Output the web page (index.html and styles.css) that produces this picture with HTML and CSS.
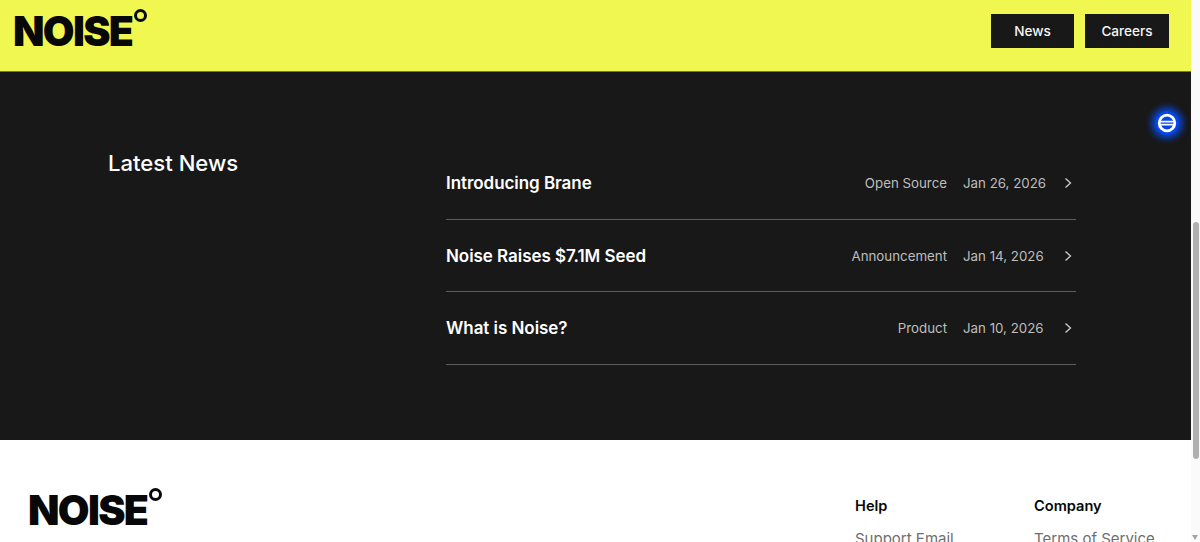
FILE: index.html
```html
<!DOCTYPE html>
<html lang="en">
<head>
    <meta charset="UTF-8">
    <meta name="viewport" content="width=device-width, initial-scale=1.0">
    <title>Noise</title>
    <link rel="stylesheet" href="styles.css">
</head>
<body>
    <div class="page">
        <div class="content">
            <!-- top bar -->
            <header class="topbar">
                <a class="logo" href="#">NOISE<span class="logo-ring"></span></a>
                <nav class="topnav">
                    <a class="navbtn navbtn-news" href="#">News</a>
                    <a class="navbtn navbtn-careers" href="#">Careers</a>
                </nav>
            </header>

            <!-- news -->
            <section class="news">
                <h2 class="news-heading">Latest News</h2>
                <div class="news-list">
                    <a class="news-row" href="#">
                        <span class="news-title">Introducing Brane</span>
                        <span class="news-tag">Open Source</span>
                        <span class="news-date">Jan 26, 2026</span>
                        <svg class="chevron" viewBox="0 0 10 12" width="10" height="12"><path d="M2.5 1.5 L7.5 6 L2.5 10.5"/></svg>
                    </a>
                    <a class="news-row" href="#">
                        <span class="news-title">Noise Raises $7.1M Seed</span>
                        <span class="news-tag">Announcement</span>
                        <span class="news-date">Jan 14, 2026</span>
                        <svg class="chevron" viewBox="0 0 10 12" width="10" height="12"><path d="M2.5 1.5 L7.5 6 L2.5 10.5"/></svg>
                    </a>
                    <a class="news-row" href="#">
                        <span class="news-title">What is Noise?</span>
                        <span class="news-tag">Product</span>
                        <span class="news-date">Jan 10, 2026</span>
                        <svg class="chevron" viewBox="0 0 10 12" width="10" height="12"><path d="M2.5 1.5 L7.5 6 L2.5 10.5"/></svg>
                    </a>
                </div>
            </section>

            <!-- footer -->
            <footer class="footer">
                <a class="logo" href="#">NOISE<span class="logo-ring"></span></a>
                <div class="footer-cols">
                    <div class="footer-col footer-col-help">
                        <h4>Help</h4>
                        <a href="#">Support Email</a>
                    </div>
                    <div class="footer-col">
                        <h4>Company</h4>
                        <a href="#">Terms of Service</a>
                    </div>
                </div>
            </footer>
        </div>

        <!-- page scrollbar -->
        <div class="scrollrail">
            <div class="scrollthumb"></div>
            <div class="scrollarrow"></div>
        </div>

        <!-- floating extension button -->
        <div class="floatbtn">
            <svg viewBox="0 0 20 20" width="20" height="20">
                <circle cx="10" cy="10" r="7.8"/>
                <path class="floatbtn-bar" d="M3 8.7 H17 M3 11.7 H17"/>
            </svg>
        </div>
    </div>
</body>
</html>
```

FILE: styles.css
```css
html, body {
    margin: 0;
    height: 100%;
    overflow: hidden;
}
body {
    background-color: rgb(255, 255, 255);
    font-family: Inter, "Liberation Sans", sans-serif;
}
a {
    text-decoration: none;
    color: inherit;
}
.page {
    position: relative;
    display: flex;
    height: 542px;
    overflow: hidden;
}
.content {
    flex: 1;
    min-width: 0;
}

/* logo */
.logo {
    position: relative;
    display: block;
    margin-left: -1px;
    font-size: 41px;
    line-height: 40px;
    font-weight: 900;
    letter-spacing: -1.7px;
    color: rgb(8, 8, 8);
}
.logo-ring {
    position: absolute;
    left: 121px;
    top: -2px;
    width: 7px;
    height: 7px;
    border: 3px solid rgb(8, 8, 8);
    border-radius: 50%;
}

/* top bar */
.topbar {
    display: flex;
    justify-content: space-between;
    align-items: flex-start;
    height: 71px;
    padding: 0 22px 0 14px;
    background-color: rgb(240, 247, 80);
    border-bottom: 1px solid rgb(120, 124, 50);
}
.topbar .logo {
    margin-top: 11px;
}
.topnav {
    display: flex;
    gap: 11px;
    margin-top: 14px;
}
.navbtn {
    display: flex;
    align-items: center;
    justify-content: center;
    height: 34px;
    font-size: 13.6px;
    font-weight: 500;
    color: rgb(245, 245, 245);
    background-color: rgb(24, 24, 24);
}
.navbtn-news {
    width: 83px;
}
.navbtn-careers {
    width: 84px;
}

/* news */
.news {
    display: flex;
    height: 368px;
    box-sizing: border-box;
    padding: 75px 115px 0 108px;
    background-color: rgb(24, 24, 24);
    color: rgb(255, 255, 255);
}
.news-heading {
    width: 338px;
    margin: 0;
    padding-top: 2px;
    font-size: 22.1px;
    line-height: 28px;
    font-weight: 500;
}
.news-list {
    flex: 1;
}
.news-row {
    display: flex;
    align-items: center;
    height: 72.5px;
    box-sizing: border-box;
    border-bottom: 1px solid rgb(92, 92, 92);
    padding-top: 1px;
    padding-right: 3px;
}
.news-title {
    flex: 1;
    font-size: 17px;
    font-weight: 600;
    letter-spacing: -0.05px;
}
.news-tag, .news-date {
    font-size: 13.3px;
    color: rgb(190, 190, 190);
}
.news-date {
    width: 82px;
    margin-left: 16px;
    margin-right: 18px;
    white-space: nowrap;
}
.chevron {
    fill: none;
    stroke: rgb(205, 205, 205);
    stroke-width: 1.3;
}

/* footer */
.footer {
    display: flex;
    justify-content: space-between;
    padding: 50px 0 0 29px;
    color: rgb(8, 8, 8);
}
.footer-cols {
    display: flex;
}
.footer-col {
    width: 157px;
    font-size: 15px;
}
.footer-col-help {
    width: 179px;
}
.footer-col h4 {
    margin: 7px 0 14px;
    font-size: 14.6px;
    line-height: 18px;
    font-weight: 600;
}
.footer-col a {
    color: rgb(110, 110, 110);
}

/* scrollbar */
.scrollrail {
    position: relative;
    flex: none;
    width: 9px;
    background-color: rgb(250, 250, 250);
}
.scrollthumb {
    position: absolute;
    left: 2px;
    top: 222px;
    width: 6px;
    height: 237px;
    border-radius: 3px;
    background-color: rgb(176, 176, 176);
}
.scrollarrow {
    position: absolute;
    left: 1px;
    bottom: 2px;
    border-left: 3.5px solid transparent;
    border-right: 3.5px solid transparent;
    border-top: 5px solid rgb(165, 165, 165);
}

/* floating button */
.floatbtn {
    position: absolute;
    left: 1155px;
    top: 111px;
    display: flex;
    align-items: center;
    justify-content: center;
    width: 24px;
    height: 24px;
    border-radius: 50%;
    background-color: rgb(5, 70, 230);
    box-shadow: 0 0 6px 4px rgba(5, 75, 240, 0.8);
}
.floatbtn circle {
    fill: none;
    stroke: rgb(255, 255, 255);
    stroke-width: 2.8;
}
.floatbtn-bar {
    fill: none;
    stroke: rgb(255, 255, 255);
    stroke-width: 1.7;
}
```
